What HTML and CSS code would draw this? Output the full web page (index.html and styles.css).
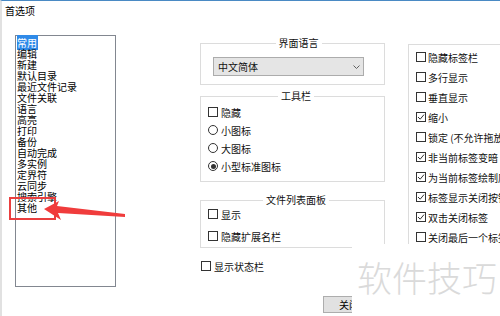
FILE: index.html
```html
<!DOCTYPE html>
<html lang="zh-CN">
<head>
  <meta charset="UTF-8">
  <title>首选项</title>
  <link rel="stylesheet" href="styles.css">
</head>
<body>
  <div class="titlebar">首选项</div>

  <div class="main">
    <!-- 左侧分类列表 -->
    <ul class="listbox">
      <li><span class="sel">常用</span></li>
      <li>编辑</li>
      <li>新建</li>
      <li>默认目录</li>
      <li>最近文件记录</li>
      <li>文件关联</li>
      <li>语言</li>
      <li>高亮</li>
      <li>打印</li>
      <li>备份</li>
      <li>自动完成</li>
      <li>多实例</li>
      <li>定界符</li>
      <li>云同步</li>
      <li>搜索引擎</li>
      <li>其他</li>
    </ul>

    <div class="middle">
      <fieldset class="group lang">
        <legend>界面语言</legend>
        <div class="combo">
          <span>中文简体</span>
          <svg class="chevron" viewBox="0 0 7 4"><polyline points="0.5,0.5 3.5,3.5 6.5,0.5"/></svg>
        </div>
      </fieldset>

      <fieldset class="group tools">
        <legend>工具栏</legend>
        <div class="opt"><span class="chk"></span>隐藏</div>
        <div class="opt"><span class="radio"></span>小图标</div>
        <div class="opt"><span class="radio"></span>大图标</div>
        <div class="opt"><span class="radio on"></span>小型标准图标</div>
      </fieldset>

      <fieldset class="group files">
        <legend>文件列表面板</legend>
        <div class="opt"><span class="chk"></span>显示</div>
        <div class="opt"><span class="chk"></span>隐藏扩展名栏</div>
      </fieldset>

      <div class="opt status"><span class="chk"></span>显示状态栏</div>

      <button class="btn">关闭</button>
    </div>

    <fieldset class="group tabs">
      <div class="opt"><span class="chk"></span>隐藏标签栏</div>
      <div class="opt"><span class="chk"></span>多行显示</div>
      <div class="opt"><span class="chk"></span>垂直显示</div>
      <div class="opt"><span class="chk on"><svg viewBox="0 0 8 8"><polyline points="1,4 3.2,6.2 7,1.6"/></svg></span>缩小</div>
      <div class="opt"><span class="chk"></span>锁定 (不允许拖放标签)</div>
      <div class="opt"><span class="chk on"><svg viewBox="0 0 8 8"><polyline points="1,4 3.2,6.2 7,1.6"/></svg></span>非当前标签变暗</div>
      <div class="opt"><span class="chk on"><svg viewBox="0 0 8 8"><polyline points="1,4 3.2,6.2 7,1.6"/></svg></span>为当前标签绘制底线</div>
      <div class="opt"><span class="chk on"><svg viewBox="0 0 8 8"><polyline points="1,4 3.2,6.2 7,1.6"/></svg></span>标签显示关闭按钮</div>
      <div class="opt"><span class="chk on"><svg viewBox="0 0 8 8"><polyline points="1,4 3.2,6.2 7,1.6"/></svg></span>双击关闭标签</div>
      <div class="opt"><span class="chk"></span>关闭最后一个标签时退出</div>
    </fieldset>
  </div>

  <!-- 标注：红框和箭头 -->
  <svg class="marker" viewBox="0 0 130 230">
    <rect x="8" y="197" width="45" height="21"/>
    <polygon points="42,208 57,200 55,205 123,213 123,216 56,212 59,219"/>
  </svg>

  <div class="watermark">软件技巧</div>
</body>
</html>
```

FILE: styles.css
```css
body {
  margin: 0;
  width: 500px;
  height: 316px;
  box-sizing: border-box;
  border-top: 1px solid #4a8ac4;
  border-left: 2px solid #e1e1e1;
  background-color: #fff;
  font-family: "Noto Sans CJK SC", sans-serif;
  font-size: 10px;
  color: #111;
  overflow: hidden;
  position: relative;
}

.titlebar {
  height: 20px;
  line-height: 20px;
  padding-left: 3px;
  color: #000;
}

.main {
  display: flex;
  align-items: flex-start;
}

/* 左侧列表 */
.listbox {
  list-style: none;
  flex-shrink: 0;
  box-sizing: border-box;
  width: 101px;
  height: 252px;
  margin: 14px 0 0 13px;
  padding: 1px 0 0 1px;
  border: 1px solid #828790;
  line-height: 11px;
  color: #000;
}

.listbox .sel {
  background-color: #2f8ae8;
  color: #fff;
  padding: 0 1px 0 0;
}

/* 中间一栏 */
.middle {
  flex-shrink: 0;
  width: 185px;
  margin: 17px 0 0 84px;
}

.group {
  box-sizing: border-box;
  width: 185px;
  margin: 0;
  padding: 0;
  border: 1px solid #dcdcdc;
}

.group legend {
  margin: 0 auto;
  padding: 0 3px;
  line-height: 10px;
}

.lang {
  padding: 9px 0 8px 12px;
}

.combo {
  box-sizing: border-box;
  width: 151px;
  height: 19px;
  display: flex;
  align-items: center;
  justify-content: space-between;
  padding: 0 3px 0 4px;
  background-color: #e5e5e5;
  border: 1px solid #acacac;
}

.chevron {
  width: 7px;
  height: 4px;
  fill: none;
  stroke: #606060;
  stroke-width: 1;
}

.tools {
  margin-top: 6px;
  padding: 2px 0 6px 7px;
}

.files {
  margin-top: 13px;
  padding: 0 0 2px 7px;
}

.files .opt + .opt {
  margin-top: 4px;
}

.opt {
  display: flex;
  align-items: center;
  height: 18px;
  white-space: nowrap;
}

.chk,
.radio {
  flex-shrink: 0;
  box-sizing: border-box;
  width: 10px;
  height: 10px;
  margin-right: 3px;
  border: 1px solid #333;
  background-color: #fff;
  display: flex;
  align-items: center;
  justify-content: center;
}

.chk svg {
  width: 8px;
  height: 8px;
  fill: none;
  stroke: #333;
  stroke-width: 1;
}

.radio {
  border-radius: 50%;
}

.radio.on::after {
  content: "";
  width: 5px;
  height: 5px;
  border-radius: 50%;
  background-color: #333;
}

.status {
  margin: 9px 0 0 1px;
}

.btn {
  display: block;
  box-sizing: border-box;
  width: 52px;
  height: 17px;
  margin: 21px 0 0 123px;
  padding: 0;
  background-color: #e1e1e1;
  border: 1px solid #adadad;
  font-family: inherit;
  font-size: 10px;
  line-height: 15px;
  color: #000;
}

/* 右侧标签选项 */
.tabs {
  flex-shrink: 0;
  width: 150px;
  margin: 23px 0 0 23px;
  padding: 2px 0 30px 7px;
}

.tabs .opt {
  height: 20px;
}

.tabs .chk {
  margin-right: 2px;
}

/* 标注 */
.marker {
  position: absolute;
  left: 0;
  top: 0;
  width: 130px;
  height: 230px;
}

.marker rect {
  fill: none;
  stroke: #ea3f3f;
  stroke-width: 2;
}

.marker polygon {
  fill: #f03c3c;
}

.watermark {
  position: absolute;
  left: 350px;
  top: 243px;
  width: 150px;
  height: 73px;
  box-sizing: border-box;
  padding: 15px 0 0 5px;
  background-color: #fff;
  font-size: 35px;
  line-height: 35px;
  font-weight: 300;
  color: #dadada;
  white-space: nowrap;
}
```
